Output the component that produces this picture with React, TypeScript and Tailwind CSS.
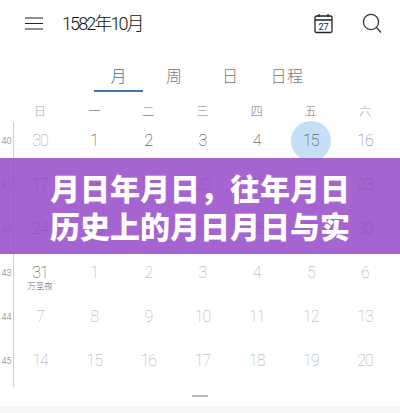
const font = { fontFamily: 'Roboto, "Noto Sans CJK SC", sans-serif' };

const weekdays = ["日", "一", "二", "三", "四", "五", "六"];

type Cell = { n: string; c: string; sub?: string; hl?: boolean };
const d = "text-[#333]";
const g = "text-[#a3a3a3]";
const l = "text-[#aaa]";
const mk = (a: (string | number)[], first: string, rest: string): Cell[] =>
  a.map((n, i) => ({ n: String(n), c: i === 0 ? first : rest }));

const weeks: { w: number; cells: Cell[] }[] = [
  { w: 40, cells: [{ n: "30", c: g }, { n: "1", c: d }, { n: "2", c: "text-[#111]" }, { n: "3", c: d }, { n: "4", c: d }, { n: "15", c: d, hl: true }, { n: "16", c: "text-[#777]" }] },
  { w: 41, cells: mk([17, 18, 19, 20, 21, 22, 23], d, d) },
  { w: 42, cells: mk([24, 25, 26, 27, 28, 29, 30], d, d) },
  { w: 43, cells: [{ n: "31", c: "text-[#444]", sub: "万圣夜" }, ...mk([1, 2, 3, 4, 5, 6], l, l)] },
  { w: 44, cells: mk([7, 8, 9, 10, 11, 12, 13], l, l) },
  { w: 45, cells: mk([14, 15, 16, 17, 18, 19, 20], l, l) },
];

const tabs = [
  { t: "月", w: "w-[49px]", ml: "ml-[94px]", c: "text-[#2f6db5]" },
  { t: "周", w: "w-[40px]", ml: "ml-[11px]", c: "text-[#777]" },
  { t: "日", w: "w-[40px]", ml: "ml-[16px]", c: "text-[#777]" },
  { t: "日程", w: "w-[40px]", ml: "ml-[17px]", c: "text-[#777] tracking-[0.5px]" },
];

export default function App() {
  return (
    <div className="relative w-[400px] h-[413px] overflow-hidden bg-white" style={font}>
      {/* top bar */}
      <div className="flex items-center h-[46px] pl-[25px] pr-[18px]">
        <svg width="18" height="13" viewBox="0 0 18 13" className="mr-[19px]" fill="none" stroke="#222" strokeWidth="1.2">
          <path d="M0 1h18M0 6.5h18M0 12h18" />
        </svg>
        <span className="text-[18px] font-light tracking-[-1.9px] text-[#111] flex-1">1582年10月</span>
        <svg width="20" height="21" viewBox="0 0 20 21" className="mr-[28px]" fill="none" stroke="#222" strokeWidth="1.3">
          <rect x="1" y="3" width="17" height="16.5" rx="1.5" />
          <path d="M1 7h17M5 1v3M14 1v3" />
          <text x="9.5" y="17" textAnchor="middle" fontSize="9" stroke="none" fill="#222" fontFamily="Roboto">27</text>
        </svg>
        <svg width="20" height="20" viewBox="0 0 20 20" fill="none" stroke="#333" strokeWidth="1.3">
          <circle cx="9" cy="9" r="7.6" />
          <path d="M14.5 14.5L19 19.5" />
        </svg>
      </div>

      {/* tabs */}
      <div className="relative h-[47px] pt-[20px]">
        <div className="flex text-[16px] leading-[22px] font-light">
          {tabs.map((t) => (
            <span key={t.t} className={`text-center ${t.w} ${t.ml} ${t.c}`}>{t.t}</span>
          ))}
        </div>
        <div className="absolute left-[94px] top-[44px] w-[49px] h-[2px] bg-[#3f78b8]" />
      </div>

      {/* weekday header */}
      <div className="grid grid-cols-7 w-[379px] ml-[13px] h-[27px] mt-[7px] text-[12px] leading-[24px] font-light text-[#777] text-center">
        {weekdays.map((w, i) => (
          <span key={w} className={i === 1 ? "text-[#444]" : i === 0 || i === 6 ? "text-[#aaa]" : ""}>{w}</span>
        ))}
      </div>

      {/* weeks */}
      <div className="relative">
        <div className="absolute left-[13px] top-[-5px] w-px h-[265px] bg-[#cfcfcf]" />
        {weeks.map((wk) => (
          <div key={wk.w} className="flex h-[44px]">
            <div className="w-[13px] text-[9px] font-light text-[#777] text-center leading-[28px]">{wk.w}</div>
            <div className="grid grid-cols-7 w-[379px]">
              {wk.cells.map((c, i) => (
                <div key={i} className="relative flex flex-col items-center">
                  {c.hl && <div className="absolute top-[-6px] left-[7.5px] w-[40px] h-[40px] rounded-full bg-[#c5dff7]" />}
                  <span className={`relative text-[16px] leading-[28px] h-[28px] font-thin tracking-[-1px] ${c.c}`}>{c.n}</span>
                  {c.sub && <span className="absolute top-[21px] text-[8.5px] leading-[12px] font-light text-[#666]">{c.sub}</span>}
                </div>
              ))}
            </div>
          </div>
        ))}
        <div className="flex justify-center mt-[4px]">
          <div className="w-[16px] h-[2px] bg-[#bbb]" />
        </div>
      </div>

      {/* footer strip */}
      <div className="absolute left-0 right-0 bottom-0 h-[7px] bg-[#f5f5f5]" />

      {/* purple banner */}
      <div className="absolute left-0 right-0 top-[158px] h-[96px] pt-[6px] bg-[#9a4fcb]/[0.88] flex flex-col items-center justify-center">
        <p className="text-[30px] leading-[38px] font-black text-white whitespace-nowrap">月日年月日，往年月日</p>
        <p className="text-[30px] leading-[38px] font-black text-white whitespace-nowrap">历史上的月日月日与实</p>
      </div>
    </div>
  );
}
